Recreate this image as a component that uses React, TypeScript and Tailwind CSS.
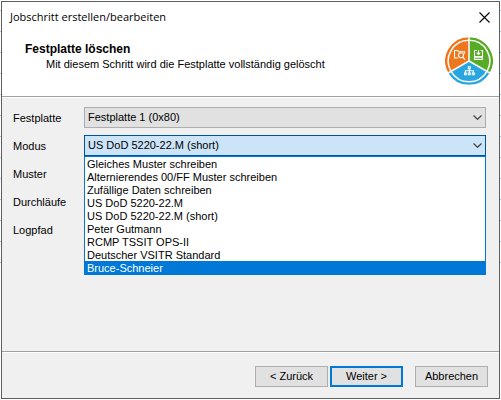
import React, { useState } from 'react';

const DISKS = ['Festplatte 1 (0x80)'];

const MODES = [
  'Gleiches Muster schreiben',
  'Alternierendes 00/FF Muster schreiben',
  'Zufällige Daten schreiben',
  'US DoD 5220-22.M',
  'US DoD 5220-22.M (short)',
  'Peter Gutmann',
  'RCMP TSSIT OPS-II',
  'Deutscher VSITR Standard',
  'Bruce-Schneier',
];

const Logo: React.FC = () => (
  <svg viewBox="0 0 144 144" className="h-12 w-12 shrink-0" aria-hidden="true">
    {/* outer ring, one arc per segment */}
    <g fill="none" strokeWidth="7">
      <path d="M72 4A68 68 0 0 1 130.9 106" stroke="#57ab27" />
      <path d="M130.9 106A68 68 0 0 1 13.1 106" stroke="#29a6df" />
      <path d="M13.1 106A68 68 0 0 1 72 4" stroke="#ee761c" />
    </g>
    <path d="M72 72V12A60 60 0 0 1 124 102Z" fill="#57ab27" />
    <path d="M72 72L124 102A60 60 0 0 1 20 102Z" fill="#29a6df" />
    <path d="M72 72L20 102A60 60 0 0 1 72 12Z" fill="#ee761c" />
    <path d="M72 72V0M72 72L134.4 108M72 72L9.6 108" stroke="#f4f4f0" strokeWidth="5" />
    {/* folder with magnifier */}
    <g fill="none" stroke="#fff" strokeWidth="3.2">
      <path d="M39 63H28.500V40.500H38L41 44H58.500V50" />
      <circle cx="48" cy="55" r="7.5" />
      <path d="M53.500 61L60 68" strokeWidth="4" />
    </g>
    {/* download to drive */}
    <g fill="none" stroke="#fff" strokeWidth="3.2">
      <path d="M95 40.500H88.500V58.500H112.500V40.500H107" />
      <path d="M100.500 40V52M95 47L100.500 52.500L106 47" />
      <path d="M88.500 62.500H112.500V67.500H88.500Z" />
    </g>
    {/* network tree */}
    <g fill="none" stroke="#fff" strokeWidth="3.2">
      <path d="M70 89.500H76V95.500H70ZM73 95.500V108M61 108V101.500H85V108" />
      <path d="M58.500 108H64V113.500H58.500ZM70 108H76V113.500H70ZM82 108H88V113.500H82Z" />
    </g>
  </svg>
);

const Chevron: React.FC = () => (
  <svg
    viewBox="0 0 9 5"
    className="pointer-events-none absolute top-2 right-1 h-[5px] w-[9px]"
    fill="none"
    stroke="#444"
    strokeWidth="1.2"
    aria-hidden="true"
  >
    <path d="M.5 .5L4.500 4.300L8.500 .5" />
  </svg>
);

const App: React.FC = () => {
  const [mode, setMode] = useState('US DoD 5220-22.M (short)');
  const [active, setActive] = useState('Bruce-Schneier');
  const [open, setOpen] = useState(true);

  const rowClass = 'flex h-[21px] items-center';
  const labelClass = 'w-[71px] shrink-0 pt-px';
  const buttonClass = 'h-[21px] w-[73px] bg-[#e1e1e1] text-center';
  const optionClass = 'h-[13px] pl-0.5 leading-[15px]';

  return (
    <div className="flex min-h-screen bg-white bg-[linear-gradient(transparent_263px,#fff_263px),linear-gradient(#fff_10px,#a9c6dc_10px,#a9c6dc_11px,#fff_11px)] bg-[length:auto,100%_21px] p-px font-['Liberation_Sans',Arial,sans-serif] text-[11px] leading-[13px] text-black">
      <main className="flex flex-1 flex-col border border-[#5d6063] bg-[#f0f0f0]">
        <header className="border-b border-[#a0a0a0] bg-white pb-[11px]">
          <div className="flex h-[30px] items-center justify-between pr-[9px] pl-2">
            <h1 className="font-['Open_Sans','Noto_Sans',sans-serif] text-[11px] leading-4">
              Jobschritt erstellen/bearbeiten
            </h1>
            <button aria-label="Schließen">
              <svg viewBox="0 0 11 11" className="h-[11px] w-[11px]" stroke="#000" strokeWidth="1.1">
                <path d="M.5 .5L10.500 10.500M10.500 .5L.5 10.500" />
              </svg>
            </button>
          </div>
          <div className="flex items-start justify-between pt-[5px] pr-1.5 pl-[23px]">
            <div className="pt-[5px]">
              <h2 className="text-[12px] leading-[15px] font-bold">Festplatte löschen</h2>
              <p className="pt-px pl-[21px]">Mit diesem Schritt wird die Festplatte vollständig gelöscht</p>
            </div>
            <Logo />
          </div>
        </header>

        <section className="flex flex-1 flex-col gap-[7px] border-y border-t-white border-b-[#a0a0a0] pt-[9px] pr-[13px] pl-[11px]">
          <div className={rowClass}>
            <label htmlFor="disk" className={labelClass}>Festplatte</label>
            <div className="relative flex-1">
              <select id="disk" className="block h-[21px] w-full appearance-none border border-[#adadad] bg-[#e1e1e1] pl-[3px]">
                {DISKS.map((d) => <option key={d}>{d}</option>)}
              </select>
              <Chevron />
            </div>
          </div>
          <div className={rowClass}>
            <label htmlFor="mode" className={labelClass}>Modus</label>
            <div className="relative flex-1">
              <select
                id="mode"
                value={mode}
                onChange={(e) => setMode(e.target.value)}
                onMouseDown={(e) => {
                  e.preventDefault();
                  setOpen(!open);
                }}
                className="block h-[21px] w-full appearance-none border border-[#005499] bg-[#cce4f7] pl-[3px]"
              >
                {MODES.map((m) => <option key={m}>{m}</option>)}
              </select>
              <Chevron />
              {open && (
                <ul role="listbox" aria-label="Modus" className="absolute inset-x-0 top-full z-10 border border-[#0078d7] bg-white">
                  {MODES.map((m) => (
                    <li
                      key={m}
                      role="option"
                      aria-selected={m === active}
                      onMouseEnter={() => setActive(m)}
                      onClick={() => {
                        setMode(m);
                        setOpen(false);
                      }}
                      className={`${optionClass} ${m === active ? 'bg-[#0078d7] text-white' : ''}`}
                    >
                      {m}
                    </li>
                  ))}
                </ul>
              )}
            </div>
          </div>
          <div className={rowClass}><span className={labelClass}>Muster</span></div>
          <div className={rowClass}><span className={labelClass}>Durchläufe</span></div>
          <div className={rowClass}><span className={labelClass}>Logpfad</span></div>
        </section>

        <footer className="flex justify-end border-t border-white pt-[13px] pr-[11px] pb-[11px]">
          <button className={`${buttonClass} border border-[#adadad]`}>&lt; Zurück</button>
          <button className={`${buttonClass} ml-0.5 border-2 border-[#0078d7]`}>Weiter &gt;</button>
          <button className={`${buttonClass} ml-3 border border-[#adadad]`}>Abbrechen</button>
        </footer>
      </main>
    </div>
  );
};

export default App;
